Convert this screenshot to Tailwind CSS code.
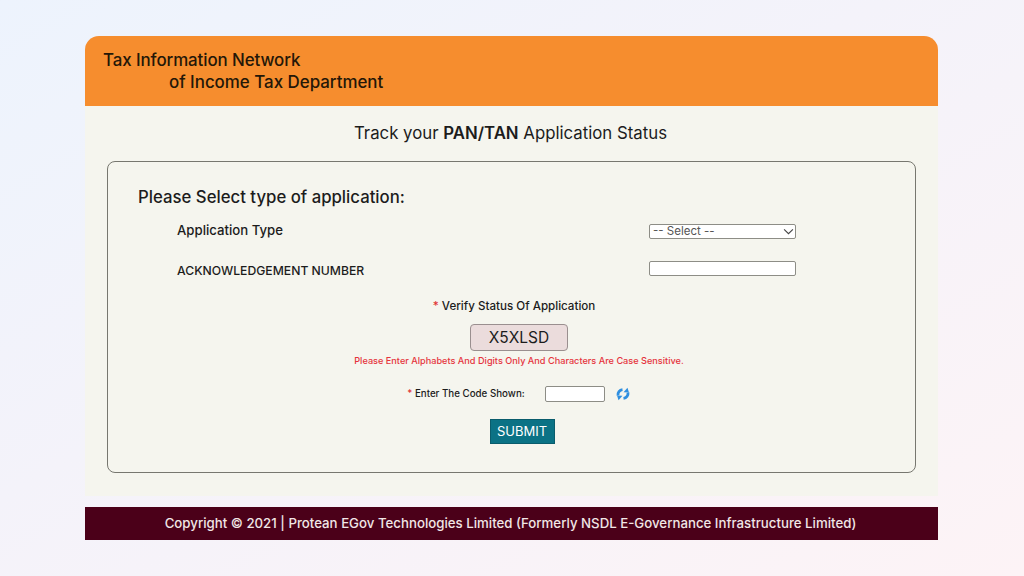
<!DOCTYPE html>
<html lang="en">
<head>
    <meta charset="UTF-8">
    <meta name="viewport" content="width=device-width, initial-scale=1.0">
    <title>Track PAN/TAN Application Status</title>
    <script src="https://cdn.jsdelivr.net/npm/@tailwindcss/browser@4"></script>
</head>
<body class="w-[1024px] h-[576px] overflow-hidden bg-gradient-to-br from-[#edf3fd] to-[#fdf3f6] font-['Inter',sans-serif] text-[#1c1c1c]">
    <div class="w-[853px] ml-[85px] pt-9">
        <header class="h-[70px] bg-[#f68d2e] rounded-t-[14px] pl-[18px] pt-[13px] text-[16.9px] leading-[22px] font-medium text-[#241708]">
            <div class="tracking-[-0.09px]">Tax Information Network</div>
            <div class="pl-[66px]">of Income Tax Department</div>
        </header>

        <main class="h-[390px] bg-[#f5f5ee] px-[22px] pt-[15px]">
            <h1 class="text-center text-[16.8px] leading-6 pr-[2px]">Track your <b class="font-semibold">PAN/TAN</b> Application Status</h1>

            <form class="h-[312px] mt-4 border border-[#77776f] rounded-lg pt-[23px] pl-[30px]">
                <h2 class="text-[16.75px] leading-6 font-medium">Please Select type of application:</h2>

                <div class="flex items-center justify-between h-5 mt-[13px] pl-[39px] pr-[119px]">
                    <label for="apptype" class="mb-[2px] text-[13.2px] font-medium">Application Type</label>
                    <div id="apptype" class="mb-[1px] w-[147px] h-[15px] bg-white border border-[#8d8d86] rounded-[2px] flex items-center justify-between pl-[3px] pr-[1px] text-[11.5px] text-[#555]">
                        <span>-- Select --</span>
                        <svg class="w-[11px] h-[11px]" viewBox="0 0 10 10" fill="none" stroke="#444" stroke-width="1"><path d="M1 3l4 4 4-4"/></svg>
                    </div>
                </div>

                <div class="flex items-center justify-between h-5 mt-[19px] pl-[39px] pr-[119px]">
                    <label for="ack" class="text-[12.2px] font-medium">ACKNOWLEDGEMENT NUMBER</label>
                    <input id="ack" type="text" class="mb-[6px] w-[147px] h-[15px] bg-white border border-[#8d8d86] rounded-[2px]">
                </div>

                <div class="w-[762px] flex flex-col items-center">
                    <div class="mt-[17px] text-[11.6px] leading-4 font-medium translate-x-[-5px]"><span class="text-[#e03131]">*</span> Verify Status Of Application</div>
                    <div class="mt-[10px] w-[98px] h-[27px] flex items-center justify-center bg-[#ebdcdc] border border-[#9a8f8f] rounded-[4px] text-[15.500px]">X5XLSD</div>
                    <p class="mt-[3px] text-[9.17px] leading-[13px] font-medium text-[#e5343c]">Please Enter Alphabets And Digits Only And Characters Are Case Sensitive.</p>

                    <div class="mt-[19px] flex items-center h-[16px]">
                        <label class="text-[9.75px] font-medium"><span class="text-[#e03131]">*</span> Enter The Code Shown:</label>
                        <input type="text" class="ml-[20px] w-[60px] h-[16px] bg-white border border-[#8d8d86] rounded-[2px]">
                        <svg class="ml-[10px] w-[16px] h-[14px]" viewBox="0 0 16 14" fill="none" stroke="#2f8fe0" stroke-width="2.8">
                            <path d="M3 8.500C2.600 5.600 4.500 3 7.500 2.600"/>
                            <path d="M13 5.500c.4 2.900-1.500 5.500-4.500 5.900"/>
                            <path d="M8.500 5.200l5.500.2L12.500.8z" fill="#2f8fe0" stroke="none"/>
                            <path d="M7.500 8.800l-5.500-.2 1.500 4.600z" fill="#2f8fe0" stroke="none"/>
                        </svg>
                    </div>

                    <button type="button" class="mt-[17px] w-[65px] h-[25px] bg-[#0b7285] border border-[#0a5c6c] text-white text-[13px] translate-x-[3px]">SUBMIT</button>
                </div>
            </form>
        </main>

        <footer class="h-[33px] mt-[11px] pt-[1px] bg-[#4b0019] text-[#f1e6e6] text-[13.25px] font-medium flex items-center justify-center pr-[2px]">
            Copyright © 2021 | Protean EGov Technologies Limited (Formerly NSDL E-Governance Infrastructure Limited)
        </footer>
    </div>
</body>
</html>
